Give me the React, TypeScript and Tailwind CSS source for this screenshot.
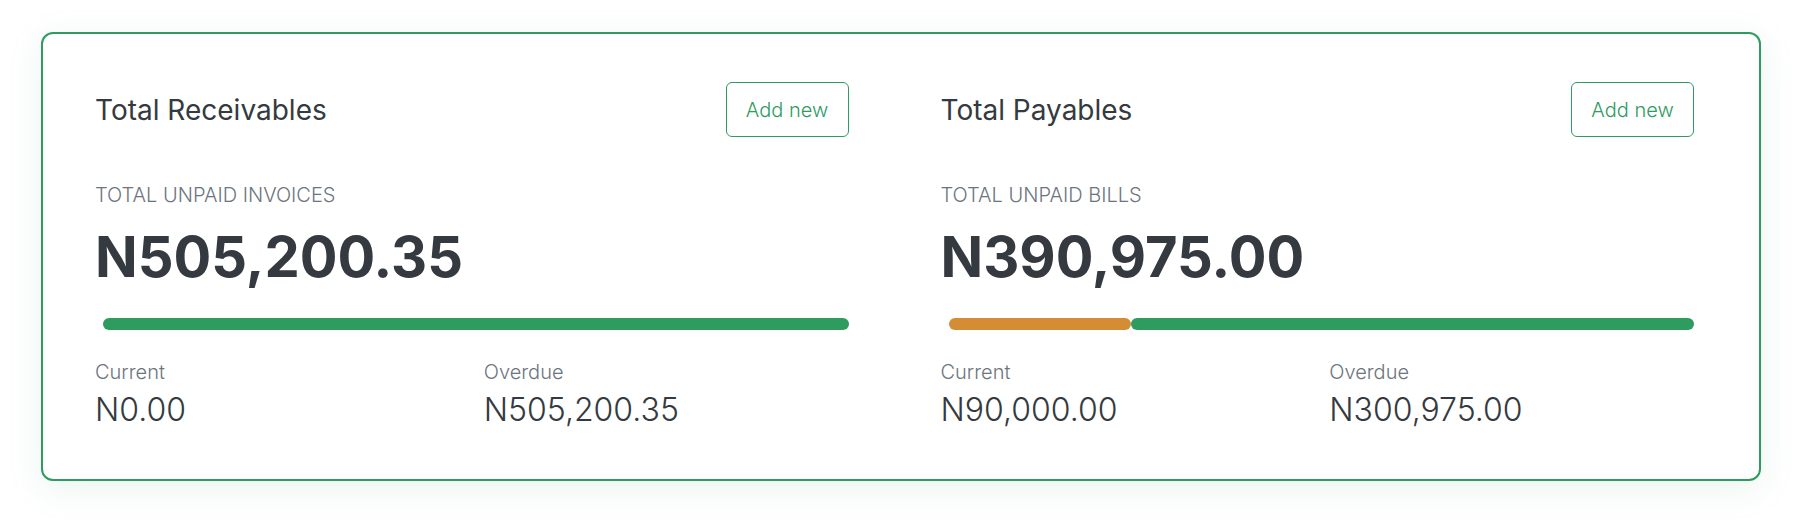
const fmt = (n: number) =>
  "N" + n.toLocaleString("en-US", { minimumFractionDigits: 2, maximumFractionDigits: 2 });

type Summary = {
  title: string;
  label: string;
  current: number;
  overdue: number;
};

const summaries: Summary[] = [
  { title: "Total Receivables", label: "TOTAL UNPAID INVOICES", current: 0, overdue: 505200.35 },
  { title: "Total Payables", label: "TOTAL UNPAID BILLS", current: 90000, overdue: 300975 },
];

const SummaryBlock = ({ item }: { item: Summary }) => {
  const total = item.current + item.overdue;
  // share of the bar that is "current" (orange); the rest is overdue (green)
  const currentPct = total > 0 && item.current > 0 ? Math.max((item.current / total) * 100, 24.5) : 0;

  return (
    <div className="flex flex-col">
      {/* header */}
      <div className="flex items-center justify-between h-[55px]">
        <h2 className="text-[28px] leading-9 text-[#343a40] font-normal">{item.title}</h2>
        <button className="h-[55px] w-[123px] rounded-md border border-[#2e9b5f] text-[20px] font-light text-[#2e9b5f]">
          Add new
        </button>
      </div>

      <p className="mt-[46px] text-[20px] leading-6 font-light text-[#6c757d]">{item.label}</p>
      <p className="mt-[22px] text-[56px] leading-none font-bold text-[#343a40]">{fmt(total)}</p>

      {/* progress bar */}
      <div className="mt-[33px] ml-2 flex h-3">
        {currentPct > 0 && (
          <div className="h-full rounded-full bg-[#d48d34]" style={{ width: `${currentPct}%` }} />
        )}
        <div className="h-full flex-1 rounded-full bg-[#2e9b5f]" />
      </div>

      <div className="mt-[30px] grid grid-cols-2 gap-x-6">
        <div>
          <p className="text-[20px] leading-6 font-light text-[#6c757d]">Current</p>
          <p className="mt-1.5 text-[32px] leading-10 font-light text-[#343a40]">{fmt(item.current)}</p>
        </div>
        <div>
          <p className="text-[20px] leading-6 font-light text-[#6c757d]">Overdue</p>
          <p className="mt-1.5 text-[32px] leading-10 font-light text-[#343a40]">{fmt(item.overdue)}</p>
        </div>
      </div>
    </div>
  );
};

export default function App() {
  return (
    <div className="h-[530px] w-full bg-white px-[41px] pt-[32px] font-['Inter',sans-serif]">
      <div className="h-[449px] rounded-xl border-2 border-[#2e9b5f] bg-white pl-[52px] pr-[65px] pt-[48px] shadow-[0_8px_36px_rgba(46,155,95,0.1)]">
        <div className="grid grid-cols-2 gap-x-[92px]">
          {summaries.map((s) => (
            <SummaryBlock key={s.title} item={s} />
          ))}
        </div>
      </div>
    </div>
  );
}
